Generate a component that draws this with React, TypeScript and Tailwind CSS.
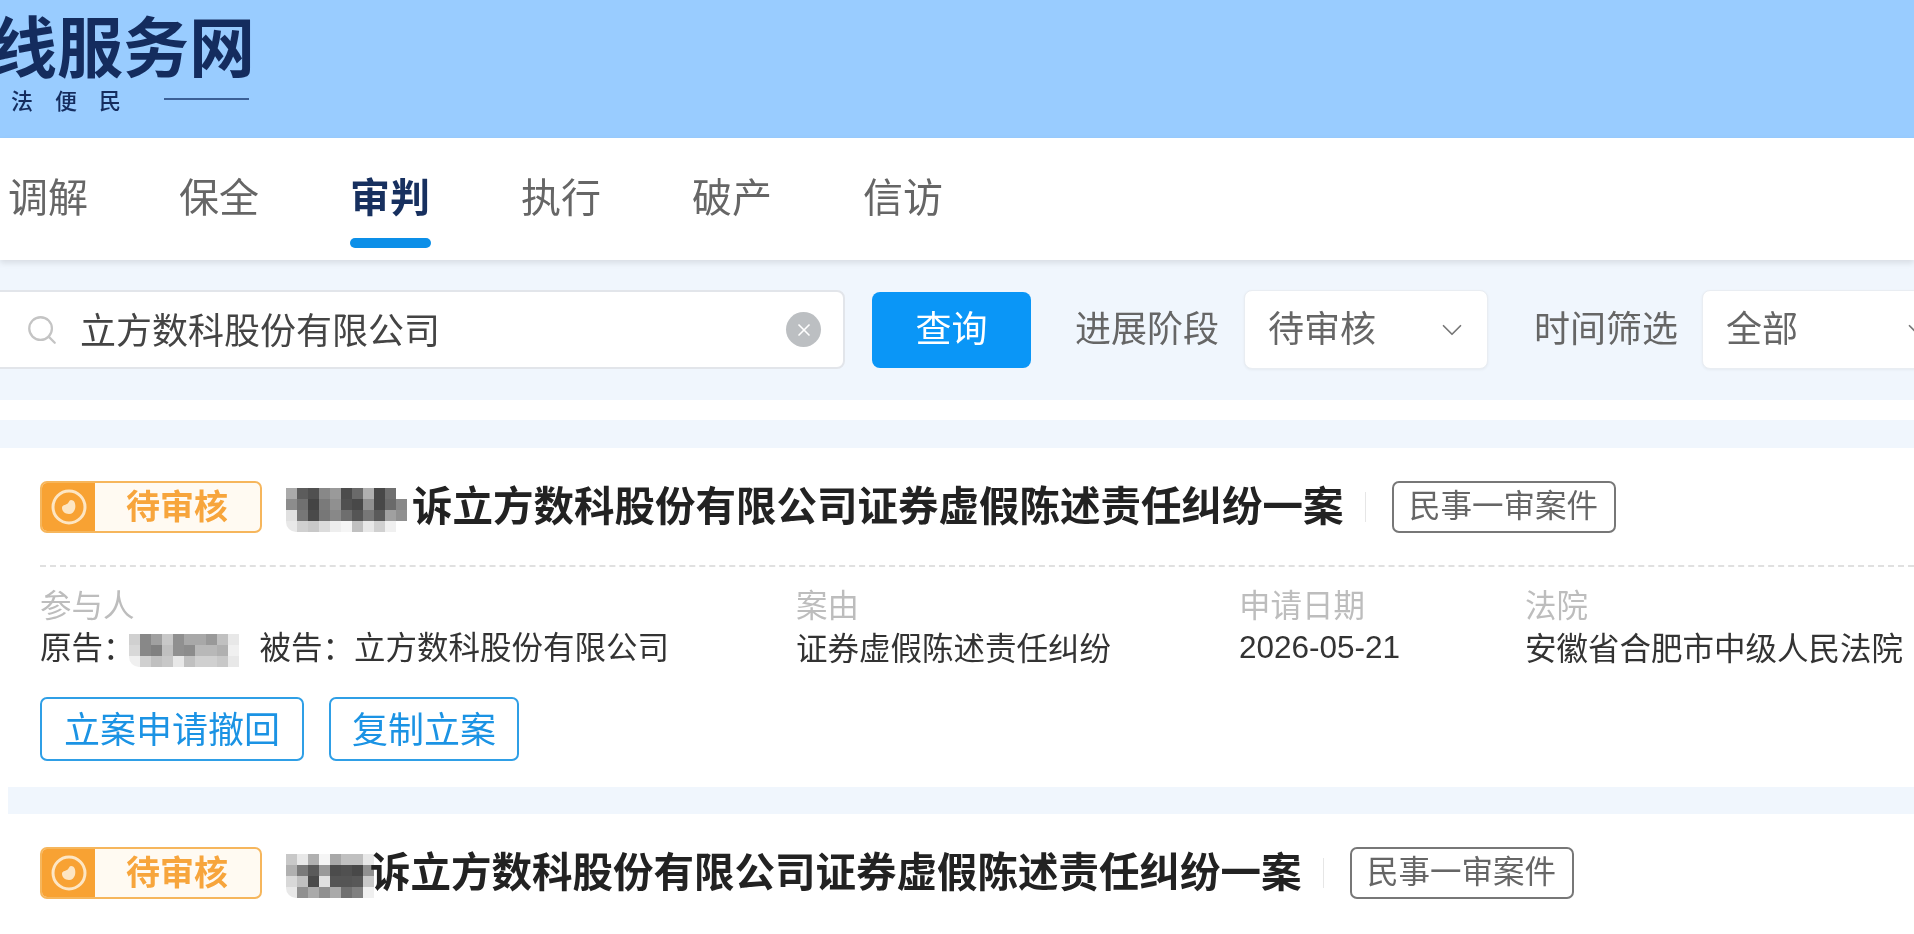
import { ChevronDown, Search, X } from "lucide-react";

const navItems = ["调解", "保全", "审判", "执行", "破产", "信访"];

const titleMosaicA = [
  ["#aaaaaa", "#5c5c5c", "#505050", "#888888", "#9a9a9a", "#4c4c4c", "#6a6a6a", "#b0b0b0", "#484848", "#707070", "#ffffff"],
  ["#8c8c8c", "#707070", "#444444", "#7a7a7a", "#909090", "#505050", "#484848", "#909090", "#484848", "#6a6a6a", "#888888"],
  ["#e0e0e0", "#777777", "#4a4a4a", "#777777", "#888888", "#6e6e6e", "#555555", "#777777", "#5a5a5a", "#a0a0a0", "#909090"],
  ["#e8e8e8", "#d0d0d0", "#c8c8c8", "#dcdcdc", "#eeeeee", "#f5f5f5", "#c0c0c0", "#e8e8e8", "#d0d0d0", "#f0f0f0", "#ffffff"],
];

const titleMosaicB = [
  ["#c8c8c8", "#e8e8e8", "#b0b0b0", "#f5f5f5", "#a8a8a8", "#c0c0c0", "#c0c0c0", "#e8e8e8"],
  ["#b0b0b0", "#7a7a7a", "#5a5a5a", "#999999", "#4c4c4c", "#505050", "#484848", "#909090"],
  ["#d8d8d8", "#c0c0c0", "#4a4a4a", "#e0e0e0", "#555555", "#555555", "#585858", "#c8c8c8"],
  ["#e8e8e8", "#909090", "#aaaaaa", "#909090", "#aaaaaa", "#707070", "#808080", "#f0f0f0"],
];

const nameMosaic = [
  ["#d0d0d0", "#888888", "#a0a0a0", "#c8c8c8", "#909090", "#a8a8a8", "#a8a8a8", "#999999", "#c0c0c0", "#e8e8e8"],
  ["#d8d8d8", "#888888", "#808080", "#c0c0c0", "#909090", "#8c8c8c", "#b8b8b8", "#b8b8b8", "#b0b0b0", "#f0f0f0"],
  ["#f0f0f0", "#d0d0d0", "#c0c0c0", "#c8c8c8", "#e8e8e8", "#c0c0c0", "#d0d0d0", "#d0d0d0", "#c8c8c8", "#e8e8e8"],
];

const Mosaic = ({ rows }: { rows: string[][] }) => (
  <div className="flex flex-col shrink-0 overflow-hidden rounded-bl-[10px]">
    {rows.map((row, rowIndex) => (
      <div key={rowIndex} className="flex h-[11px]">
        {row.map((color, cellIndex) => (
          <div
            key={cellIndex}
            className="w-[11px] h-full"
            style={{ backgroundColor: color }}
          />
        ))}
      </div>
    ))}
  </div>
);

const StatusBadge = () => (
  <div className="flex w-[222px] h-[52px] shrink-0 rounded-[7px] border-2 border-[#f6b65c] bg-[#fffaf2] overflow-hidden">
    <div className="flex items-center justify-center w-[53px] bg-[#f8a233]">
      <svg width="38" height="38" viewBox="0 0 38 38" fill="none">
        <circle cx="19" cy="19" r="16" stroke="#fde6c4" strokeWidth="3" />
        <path
          d="M12 20c0-3 3-3 5-4 2-1 2-4 4-4 4 0 5 5 4 9-1 3-3 5-6 5-4 0-7-3-7-6z"
          fill="#fde6c4"
        />
      </svg>
    </div>
    <div className="flex-1 flex items-center justify-center pr-[1px] pb-[4px] text-[34px] leading-none font-bold text-[#f7a53c]">
      待审核
    </div>
  </div>
);

const CaseTitle = ({ mosaic, titleClass }: { mosaic: string[][]; titleClass: string }) => (
  <div className="flex items-center h-[52px]">
    <StatusBadge />
    <div className="ml-[24px] mt-[6px]">
      <Mosaic rows={mosaic} />
    </div>
    <h2
      className={`pb-[6px] text-[40.5px] leading-[52px] font-bold text-[#222222] whitespace-nowrap ${titleClass}`}
    >
      诉立方数科股份有限公司证券虚假陈述责任纠纷一案
    </h2>
    <div className="ml-[21px] w-px h-[30px] bg-[#e6e6e6]" />
    <div className="ml-[26px] flex items-center justify-center w-[224px] h-[52px] pb-[6px] rounded-[7px] border-2 border-[#777777] text-[31.5px] leading-none text-[#666666]">
      民事一审案件
    </div>
  </div>
);

const SelectBox = ({ value, className }: { value: string; className: string }) => (
  <div
    className={`flex items-center justify-between shrink-0 h-[79px] bg-white rounded-[8px] border border-[#e9edf2] shadow-[0_1px_3px_rgba(0,0,0,0.05)] pl-[23px] pr-[18px] ${className}`}
  >
    <span className="pb-[8px] text-[36px] leading-none text-[#666666]">{value}</span>
    <ChevronDown size={34} strokeWidth={1.2} className="text-[#777777] shrink-0" />
  </div>
);

export default function App() {
  return (
    <div className="w-[1914px] h-[934px] overflow-hidden bg-[#f0f6fd] blur-[0.5px] font-['Noto_Sans_CJK_SC',sans-serif]">
      <header className="h-[138px] bg-[#99ccff] overflow-hidden">
        <div className="-ml-[9px] pt-[10px]">
          <div className="text-[66px] leading-[66px] font-bold text-[#142c5e] whitespace-nowrap">
            线服务网
          </div>
          <div className="flex items-center mt-[10px] ml-[20px] text-[#142c5e]">
            <span className="text-[22px] leading-[26px] font-medium tracking-[22px] whitespace-nowrap">
              法便民
            </span>
            <div className="ml-[21px] w-[85px] h-[2px] bg-[#3b5f96]" />
          </div>
        </div>
      </header>

      <nav className="relative z-10 flex gap-[91px] h-[122px] pl-[8px] pt-[38px] bg-white shadow-[0_3px_6px_rgba(0,0,0,0.1)]">
        {navItems.map((item) => (
          <div key={item} className="flex flex-col items-center w-[80px]">
            <span
              className={`pb-[3px] -mt-[3px] text-[40px] leading-[44px] whitespace-nowrap ${
                item === "审判" ? "font-bold text-[#17305f]" : "text-[#666666]"
              }`}
            >
              {item}
            </span>
            {item === "审判" && (
              <div className="mt-[18px] w-[81px] h-[10px] rounded-full bg-[#0c8fe8]" />
            )}
          </div>
        ))}
      </nav>

      <section className="flex items-center pt-[30px] w-[1960px] -ml-[10px]">
        <div className="flex items-center shrink-0 w-[855px] h-[79px] bg-white rounded-[8px] border-2 border-[#e2e5ea] pl-[33px] pr-[22px]">
          <Search size={34} strokeWidth={1.6} className="text-[#c4c4c4] shrink-0" />
          <span className="ml-[21px] pb-[3px] flex-1 text-[36px] leading-none text-[#444444] whitespace-nowrap">
            立方数科股份有限公司
          </span>
          <div className="flex items-center justify-center w-[35px] h-[35px] rounded-full bg-[#bcbfc2]">
            <X size={20} strokeWidth={2} className="text-white" />
          </div>
        </div>
        <button className="ml-[27px] shrink-0 w-[159px] h-[76px] pb-[7px] rounded-[8px] bg-[#0a96f7] text-[36px] leading-none text-white">
          查询
        </button>
        <span className="ml-[44px] pb-[7px] shrink-0 text-[36px] leading-none text-[#666666]">进展阶段</span>
        <SelectBox value="待审核" className="ml-[25px] w-[244px]" />
        <span className="ml-[46px] pb-[7px] shrink-0 text-[36px] leading-none text-[#666666]">时间筛选</span>
        <SelectBox value="全部" className="ml-[24px] w-[252px]" />
      </section>

      <div className="mt-[31px] h-[20px] bg-white" />

      <main className="mt-[28px] flex flex-col gap-[27px] border-l-[8px] border-white">
        <article className="h-[339px] bg-white pl-[32px] pt-[33px]">
          <CaseTitle mosaic={titleMosaicA} titleClass="ml-[5px]" />
          <div className="mt-[32px] border-t-2 border-dashed border-[#e0e0e0]" />
          <div className="grid grid-cols-[756px_443px_286px_1fr] mt-[20px] text-[31.5px]">
            <span className="leading-[32px] text-[#bdbdbd]">参与人</span>
            <span className="leading-[32px] text-[#bdbdbd]">案由</span>
            <span className="leading-[32px] text-[#bdbdbd]">申请日期</span>
            <span className="leading-[32px] text-[#bdbdbd]">法院</span>
            <div className="flex items-center mt-[9px] h-[36px] text-[#333333] whitespace-nowrap">
              原告：
              <div className="-ml-[6px] mt-[9px]">
                <Mosaic rows={nameMosaic} />
              </div>
              <span className="ml-[21px]">被告：立方数科股份有限公司</span>
            </div>
            <span className="mt-[9px] leading-[36px] text-[#333333] whitespace-nowrap">证券虚假陈述责任纠纷</span>
            <span className="mt-[10px] leading-[36px] text-[#333333] font-['Liberation_Sans',sans-serif]">2026-05-21</span>
            <span className="mt-[9px] leading-[36px] text-[#333333] whitespace-nowrap">安徽省合肥市中级人民法院</span>
          </div>
          <div className="flex gap-[25px] mt-[32px]">
            <button className="w-[264px] h-[64px] pb-[5px] rounded-[7px] border-2 border-[#2f9fe6] text-[36px] leading-none text-[#1b93e4]">
              立案申请撤回
            </button>
            <button className="w-[190px] h-[64px] pb-[5px] rounded-[7px] border-2 border-[#2f9fe6] text-[36px] leading-none text-[#1b93e4]">
              复制立案
            </button>
          </div>
        </article>

        <article className="h-[200px] bg-white pl-[32px] pt-[33px]">
          <CaseTitle mosaic={titleMosaicB} titleClass="-ml-[4px]" />
        </article>
      </main>
    </div>
  );
}
